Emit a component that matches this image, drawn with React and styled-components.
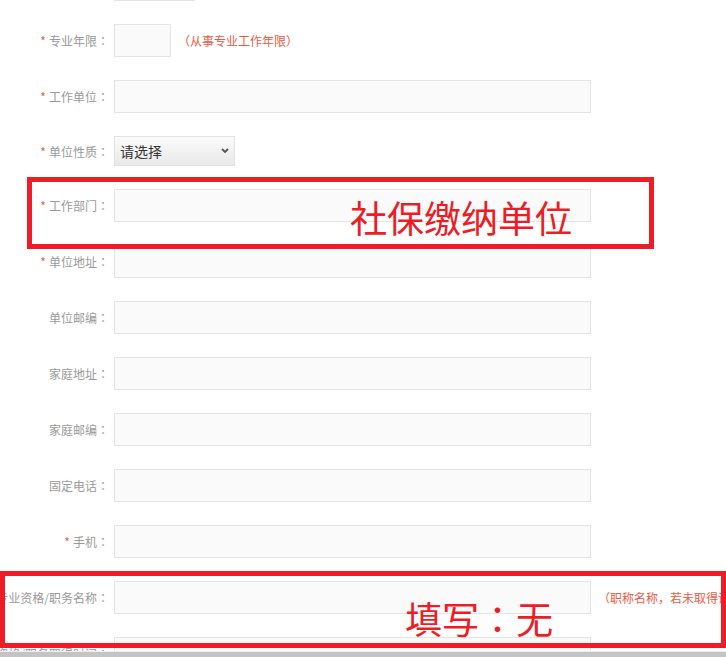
import React from 'react'
import styled, { createGlobalStyle } from 'styled-components'

const GlobalStyle = createGlobalStyle`
  html, body {
    margin: 0;
    padding: 0;
    background: #fff;
    overflow: hidden;
  }
  body {
    font-family: "Noto Sans CJK SC", "Noto Sans", sans-serif;
    text-spacing-trim: space-all;
  }
`

const Page = styled.div`
  position: relative;
  width: 726px;
  height: 657px;
  overflow: hidden;
`

const Form = styled.div`
  margin-top: -32px;
  display: flex;
  flex-direction: column;
  gap: 23px;
`

const Row = styled.div`
  display: flex;
  align-items: center;
`

const Label = styled.label`
  flex: 0 0 109px;
  min-width: 0;
  margin-right: 5px;
  display: flex;
  justify-content: flex-end;
  white-space: nowrap;
  font-size: 12px;
  color: #9a9a9a;
`

const Star = styled.em`
  font-style: normal;
  color: #ef5b48;
  margin-right: 3px;
`

const Colon = styled.span`
  font-family: "Noto Sans CJK JP", sans-serif;
`

const Input = styled.input`
  flex: 0 0 auto;
  box-sizing: border-box;
  width: ${p => p.$w}px;
  height: 33px;
  margin: 0;
  padding: 0 8px;
  border: 1px solid #e4e4e4;
  background: #fafafa;
  outline: none;
`

const Hint = styled.span`
  flex: 0 0 auto;
  margin-left: 7px;
  font-family: "Noto Sans CJK SC", sans-serif;
  font-size: 12px;
  font-feature-settings: "chws" 0, "halt" 0;
  text-spacing-trim: space-all;
  white-space: nowrap;
  color: #ec5a44;
`

const SelectWrap = styled.div`
  position: relative;
  flex: 0 0 121px;
  height: 30px;
`

const Select = styled.select`
  appearance: none;
  box-sizing: border-box;
  width: 100%;
  height: 100%;
  margin: 0;
  padding: 0 0 0 5px;
  border: 1px solid #e2e2e2;
  border-radius: 0;
  background: linear-gradient(#fbfbfb, #e9e9e9);
  font-family: "Noto Sans CJK SC", sans-serif;
  font-size: 14px;
  color: #333;
  outline: none;
`

const Chevron = styled.svg`
  position: absolute;
  right: 6px;
  top: 12px;
  pointer-events: none;
`

const AnnotBox = styled.div`
  position: absolute;
  box-sizing: border-box;
  left: ${p => p.$left}px;
  top: ${p => p.$top}px;
  width: ${p => p.$w}px;
  height: ${p => p.$h}px;
  border: 5px solid #ee1c25;
  display: flex;
  align-items: flex-start;
  padding: ${p => p.$pad};
`

const AnnotText = styled.div`
  font-family: "Noto Sans CJK JP", "Noto Sans CJK SC", sans-serif;
  font-size: 37px;
  line-height: 1;
  white-space: nowrap;
  color: #ee1c25;
`

const BottomBar = styled.div`
  position: absolute;
  left: 0;
  right: 0;
  bottom: 0;
  height: 5px;
  background: #c4c4c4;
  border-top: 1px solid #ededed;
`

const rows = [
  { label: '工作年份', req: true, w: 81 },
  { label: '专业年限', req: true, w: 57, hint: '（从事专业工作年限）' },
  { label: '工作单位', req: true, w: 477 },
  { label: '单位性质', req: true, select: true },
  { label: '工作部门', req: true, w: 477 },
  { label: '单位地址', req: true, w: 477 },
  { label: '单位邮编', w: 477 },
  { label: '家庭地址', w: 477 },
  { label: '家庭邮编', w: 477 },
  { label: '固定电话', w: 477 },
  { label: '手机', req: true, w: 477 },
  { label: '专业资格/职务名称', w: 477, hint: '（职称名称，若未取得请填写无）' },
  { label: '专业资格/职务取得时间', w: 477 },
]

export default function App() {
  return (
    <>
      <GlobalStyle />
      <Page>
        <Form>
          {rows.map((r, i) => (
            <Row key={i}>
              <Label>
                {r.req && <Star>*</Star>}
                {r.label}
                <Colon>：</Colon>
              </Label>
              {r.select ? (
                <SelectWrap>
                  <Select defaultValue="">
                    <option value="">请选择</option>
                  </Select>
                  <Chevron width="8" height="6" viewBox="0 0 8 6">
                    <path d="M1 1 L4 4 L7 1" fill="none" stroke="#555" strokeWidth="1.8" />
                  </Chevron>
                </SelectWrap>
              ) : (
                <Input $w={r.w} />
              )}
              {r.hint && <Hint>{r.hint}</Hint>}
            </Row>
          ))}
        </Form>

        <AnnotBox $left={27} $top={177} $w={627} $h={72} $pad="17px 0 0 318px">
          <AnnotText>社保缴纳单位</AnnotText>
        </AnnotBox>
        <AnnotBox $left={0} $top={571} $w={726} $h={77} $pad="24px 0 0 400px">
          <AnnotText>填写：无</AnnotText>
        </AnnotBox>
        <BottomBar />
      </Page>
    </>
  )
}
